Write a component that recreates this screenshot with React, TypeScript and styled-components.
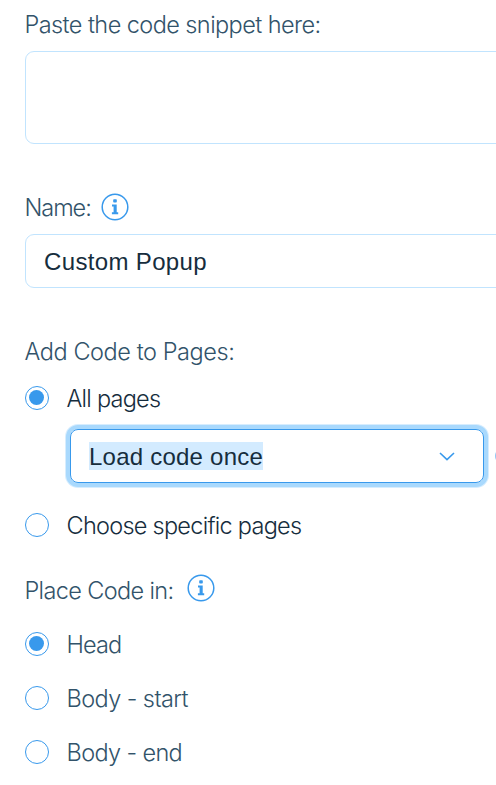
import React, { useState } from "react";
import styled, { createGlobalStyle } from "styled-components";

const GlobalStyle = createGlobalStyle`
  *, *::before, *::after { box-sizing: border-box; }
  html, body { margin: 0; padding: 0; background: #fff; overflow: hidden; }
`;

const blue = "#3899ec";
const slate = "#32536a";
const ink = "#162d3d";

const Form = styled.main`
  width: 100%;
  height: 785px;
  padding: 9px 0 0 25px;
  overflow: hidden;
  font-family: Inter, "Liberation Sans", sans-serif;
  font-size: 23.5px;
  font-weight: 300;
  line-height: 30px;
  color: ${slate};
`;

const Text = styled.span<{ $track?: number }>`
  margin: 2px 0 0 -0.5px;
  white-space: pre;
  letter-spacing: ${(p) => p.$track ?? 0}px;
`;

const Value = styled.span<{ $track: number; $selected?: boolean }>`
  height: ${(p) => (p.$selected ? 28 : 30)}px;
  font-family: "Liberation Sans", Arial, sans-serif;
  font-size: 24px;
  font-weight: 400;
  white-space: pre;
  letter-spacing: ${(p) => p.$track}px;
  color: ${ink};
  background: ${(p) => (p.$selected ? "#d3ebff" : "transparent")};
`;

const LabelRow = styled.div<{ $top?: number; $gap?: number }>`
  display: flex;
  align-items: center;
  gap: ${(p) => p.$gap ?? 0}px;
  height: 30px;
  margin-top: ${(p) => p.$top ?? 0}px;
`;

const Field = styled.div<{ $height: number; $top: number }>`
  display: flex;
  align-items: center;
  width: 600px;
  height: ${(p) => p.$height}px;
  margin-top: ${(p) => p.$top}px;
  padding: 2px 19px 0 18px;
  border: 1px solid #c1e4fe;
  border-radius: 9px;
`;

const RadioRow = styled.div<{ $top: number; $dark?: boolean }>`
  display: flex;
  align-items: center;
  gap: 18px;
  height: 30px;
  margin-top: ${(p) => p.$top}px;
  color: ${(p) => (p.$dark ? ink : slate)};
  cursor: pointer;
`;

const Circle = styled.span<{ $on: boolean }>`
  display: flex;
  flex: none;
  width: 24px;
  height: 24px;
  padding: 3px;
  border: 1px solid ${blue};
  border-radius: 50%;
  &::after {
    content: "";
    width: 15px;
    height: 15px;
    border-radius: 50%;
    background: ${(p) => (p.$on ? blue : "transparent")};
  }
`;

const SelectRow = styled.div`
  display: flex;
  align-items: center;
  gap: 11px;
  width: 500px;
  margin: 16px 0 0 45px;
`;

const Select = styled.div`
  display: flex;
  align-items: center;
  justify-content: space-between;
  flex: none;
  width: 414px;
  height: 54px;
  padding: 0 28px 0 18px;
  border: 1px solid ${blue};
  border-radius: 8px;
  box-shadow: 0 0 0 4px #a9d9fd, 0 0 0 5px #d7edfe;
`;

const InfoSvg = styled.svg<{ $up?: number }>`
  flex: none;
  display: block;
  margin-bottom: ${(p) => p.$up ?? 0}px;
`;

const Info = ({ up }: { up?: number }) => (
  <InfoSvg $up={up} width="28" height="28" viewBox="0 0 28 28" fill="none">
    <circle cx="14" cy="14" r="12.8" stroke={blue} strokeWidth="1.5" />
    <rect x="12.2" y="6.3" width="3.6" height="3.2" rx="0.8" fill={blue} />
    <path d="M11 11.5H15.7V19.2H17.2V21.3H10.9V19.2H12.6V13.4H11Z" fill={blue} />
  </InfoSvg>
);

const Chevron = () => (
  <svg width="16" height="9" viewBox="0 0 16 9" fill="none">
    <path d="M1 1L8 7.7L15 1" stroke={blue} strokeWidth="1.6" />
  </svg>
);

type RadioProps = {
  label: string;
  on: boolean;
  top: number;
  track: number;
  dark?: boolean;
  onPick: () => void;
};

const Radio = ({ label, on, top, track, dark, onPick }: RadioProps) => (
  <RadioRow $top={top} $dark={dark} role="radio" aria-checked={on} onClick={onPick}>
    <Circle $on={on} />
    <Text $track={track}>{label}</Text>
  </RadioRow>
);

export default function App() {
  const [pages, setPages] = useState("all");
  const [place, setPlace] = useState("head");
  return (
    <>
      <GlobalStyle />
      <Form>
        <LabelRow><Text $track={-0.57}>Paste the code snippet here:</Text></LabelRow>
        <Field $height={93} $top={12} />
        <LabelRow $top={48} $gap={10.5}>
          <Text $track={-1.05}>Name:</Text>
          <Info />
        </LabelRow>
        <Field $height={54} $top={12}><Value $track={0.35}>Custom Popup</Value></Field>
        <LabelRow $top={48}><Text $track={-0.43}>Add Code to Pages:</Text></LabelRow>
        <Radio label="All pages" dark top={17} track={-0.75} on={pages === "all"} onPick={() => setPages("all")} />
        <SelectRow>
          <Select>
            <Value $track={0.23} $selected>Load code once</Value>
            <Chevron />
          </Select>
          <Info />
        </SelectRow>
        <Radio label="Choose specific pages" dark top={27} track={-0.73} on={pages === "some"} onPick={() => setPages("some")} />
        <LabelRow $top={35} $gap={13.2}>
          <Text $track={-0.64}>Place Code in:</Text>
          <Info up={4} />
        </LabelRow>
        <Radio label="Head" top={24} track={-0.9} on={place === "head"} onPick={() => setPlace("head")} />
        <Radio label="Body - start" top={24} track={-0.57} on={place === "start"} onPick={() => setPlace("start")} />
        <Radio label="Body - end" top={24} track={-0.63} on={place === "end"} onPick={() => setPlace("end")} />
      </Form>
    </>
  );
}
